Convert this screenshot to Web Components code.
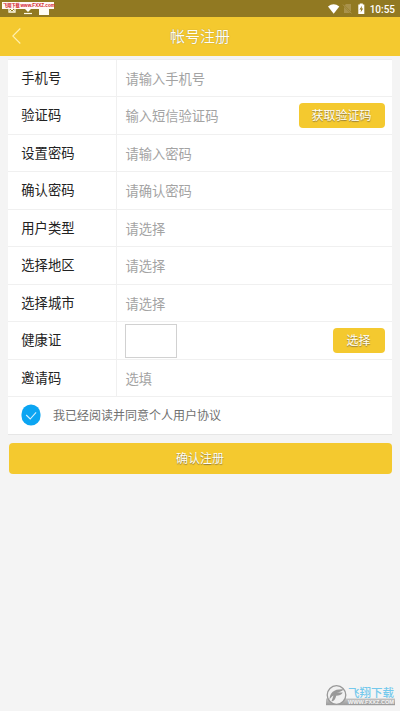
<!DOCTYPE html>
<html lang="zh-CN">
<head>
<meta charset="utf-8">
<title>帐号注册</title>
<style>
html,body{margin:0;height:100%}
body{background:#f4f4f4;font-family:"Noto Sans CJK SC",sans-serif;overflow:hidden}
</style>
</head>
<body>
<register-page></register-page>
<script>
const define = (name, html) => customElements.define(name, class extends HTMLElement {
  constructor() {
    super();
    this.attachShadow({mode: 'open'}).innerHTML = html;
  }
});

define('status-bar', `<style>
:host{display:flex;height:17px;background:#917922;position:relative;align-items:center;justify-content:flex-end;box-sizing:border-box;padding-right:5px;color:#fff}
svg{display:block}
.right{display:flex;align-items:center}
time{font:500 10px/17px Roboto,sans-serif;margin-left:5px;white-space:nowrap;padding-top:1px}
.left{position:absolute;left:8px;top:5px}
.tag{position:absolute;left:2px;top:2px;width:52px;height:7px;display:block;background:#fffaf7;overflow:visible}
.tag text{fill:#d3202a;font-weight:700;font-family:"Liberation Sans","Noto Sans CJK SC",sans-serif}
</style>
<svg class="left" width="44" height="11" viewBox="0 0 44 11"><path d="M1 1v6h6V1" fill="none" stroke="#fffbe8" stroke-width="1.3"/><path d="M2 6l2-2 2 2" fill="none" stroke="#fffbe8"/><path d="M17 4h6l-3 3z" fill="#fff"/><path d="M16 8.500h8" stroke="#fffbe8" stroke-width="1.2"/><path d="M31 3h10v7H31z" fill="#fffdf5"/></svg>
<svg class="tag" width="52" height="7" viewBox="0 0 52 7"><text x="1" y="5.400" font-size="4.200">飞翔下载</text><text x="18.500" y="5.100" font-size="4.600">www.FXXZ.com</text></svg>
<div class="right">
<svg width="37" height="12" viewBox="0 0 37 12"><path d="M0 3.500Q5.600-.9 11.300 3.500L5.700 10.700z" fill="#fff"/><path d="M16 3l2-2h5v9h-7z" fill="#a9924b"/><path d="M14.700 1.500l9 9" stroke="#917922" stroke-width="1.700"/><path d="M15 1.600l8.500 8.800" stroke="#b09b58" stroke-width=".9"/><path d="M30.300 1.500h1.500V.5h3v1h1.500v9.500h-6z" fill="#fff"/><path d="M34 2.800l-2.500 3.800h1.600l-.5 3 2.600-4h-1.600z" fill="#917922"/></svg>
<time>10:55</time></div>`);

define('nav-bar', `<style>
:host{display:grid;grid-template-columns:40px 1fr 40px;align-items:center;height:39px;background:#f4c92f;color:#fffef5;box-sizing:border-box}
h1{margin:0;text-align:center;font-size:15px;font-weight:400;line-height:22px;padding-bottom:2px;text-shadow:0 0 1px #8d773b}
svg{display:block;margin-left:11px;margin-top:-1px}
</style>
<svg width="12" height="18" viewBox="0 0 12 18"><path d="M9.300 1.500L1.800 9l7.500 7.500" fill="none" stroke="#fff0ae" stroke-width="1.100"/></svg>
<h1><slot></slot></h1>`);

define('form-row', `<style>
:host{display:grid;grid-template-columns:108px 1fr auto;height:37.5px;box-sizing:border-box;border-bottom:1px solid #f0f0f0;font-size:13.3px;line-height:20px;align-items:center;padding-right:7.5px}
.label{color:#222;padding-left:13.3px}
.value{align-self:stretch;display:flex;align-items:center;border-left:1px solid #f0f0f0;padding:1.600px 0 0 8.400px;color:#a3a3a3;box-sizing:border-box}
</style>
<div class="label"><slot name="label"></slot></div><div class="value"><slot></slot></div><slot name="action"></slot>`);

define('yellow-button', `<style>
:host{display:flex;justify-content:center;height:25.5px;border-radius:4px;background:#f4c92f;color:#fffef8;font-size:12px;line-height:23px;text-shadow:0 .5px 1px #8d773b;box-sizing:border-box}
:host([wide]){height:31px;line-height:29.5px;margin:0 .5px}
</style><slot></slot>`);

define('photo-box', `<style>:host{display:block;width:52px;height:34px;margin:-1px 0 0 -.5px;border:1px solid #d1d1d1;box-sizing:border-box;background:#fff}</style>`);

define('agree-row', `<style>
:host{display:flex;height:37.5px;align-items:center;box-sizing:border-box;border-bottom:1px solid #e6e6e6;padding-left:12.5px;color:#707070;font-size:12px;line-height:18px;gap:12.5px}
svg{display:block}
</style>
<svg width="20" height="22" viewBox="0 0 20 22"><rect x=".5" y=".5" width="19" height="21" rx="9.500" fill="#0ba5f2"/><path d="M5.200 11l4 4 5.900-6.600" fill="none" stroke="#d8f1ff" stroke-width="1.100"/></svg>
<span><slot></slot></span>`);

define('site-mark', `<style>
:host{position:absolute;left:325px;top:684px;width:71px;height:22px;display:block}
svg{display:block}
text{font-family:"Noto Sans CJK SC",sans-serif}
.url{font-family:"Liberation Sans",sans-serif}
</style>
<svg width="71" height="22" viewBox="0 0 71 22">
<defs><linearGradient id="g" x2="0" y2="1"><stop offset="0" stop-color="#c4c4c4"/><stop offset="1" stop-color="#999"/></linearGradient></defs>
<rect x="1" y="14.500" width="69" height="6.700" fill="url(#g)"/>
<text x="23" y="13.200" font-size="11.500" font-weight="500" fill="#74c9ec">飞翔下载</text>
<text class="url" x="23" y="20.200" font-size="5.600" font-weight="700" fill="#f5f5f5">WWW.FXXZ.COM</text>
<circle cx="11.500" cy="11" r="9.300" fill="#f1f1f1" stroke="#999" stroke-width="1.300"/>
<path d="M4.500 15.500C5 8 9 4.800 18.500 5.200c-1.500 2.500-4 2.700-7 3.400h6.300c-1.300 2.700-3.600 3.100-6.600 3.200-.8 4.200-3 6-4.700 5.200 1-2 1.300-4 2-5.500-1.800 1-2.800 2.400-4 4z" fill="#999"/>
</svg>`);

define('register-page', `<style>
:host{display:block;height:711px;overflow:hidden;position:relative}
main{padding:2.6px 8px 0}
.card{background:#fff;border-top:1px solid #ededed;margin-bottom:8px}
.code{width:86px}.pick{width:52px}
</style>
<status-bar></status-bar>
<nav-bar>帐号注册</nav-bar>
<main>
<div class="card">
<form-row><span slot="label">手机号</span>请输入手机号</form-row>
<form-row><span slot="label">验证码</span>输入短信验证码<yellow-button class="code" slot="action">获取验证码</yellow-button></form-row>
<form-row><span slot="label">设置密码</span>请输入密码</form-row>
<form-row><span slot="label">确认密码</span>请确认密码</form-row>
<form-row><span slot="label">用户类型</span>请选择</form-row>
<form-row><span slot="label">选择地区</span>请选择</form-row>
<form-row><span slot="label">选择城市</span>请选择</form-row>
<form-row><span slot="label">健康证</span><photo-box></photo-box><yellow-button class="pick" slot="action">选择</yellow-button></form-row>
<form-row><span slot="label">邀请码</span>选填</form-row>
<agree-row>我已经阅读并同意个人用户协议</agree-row>
</div>
<yellow-button wide>确认注册</yellow-button>
</main>
<site-mark></site-mark>`);
</script>
</body>
</html>
